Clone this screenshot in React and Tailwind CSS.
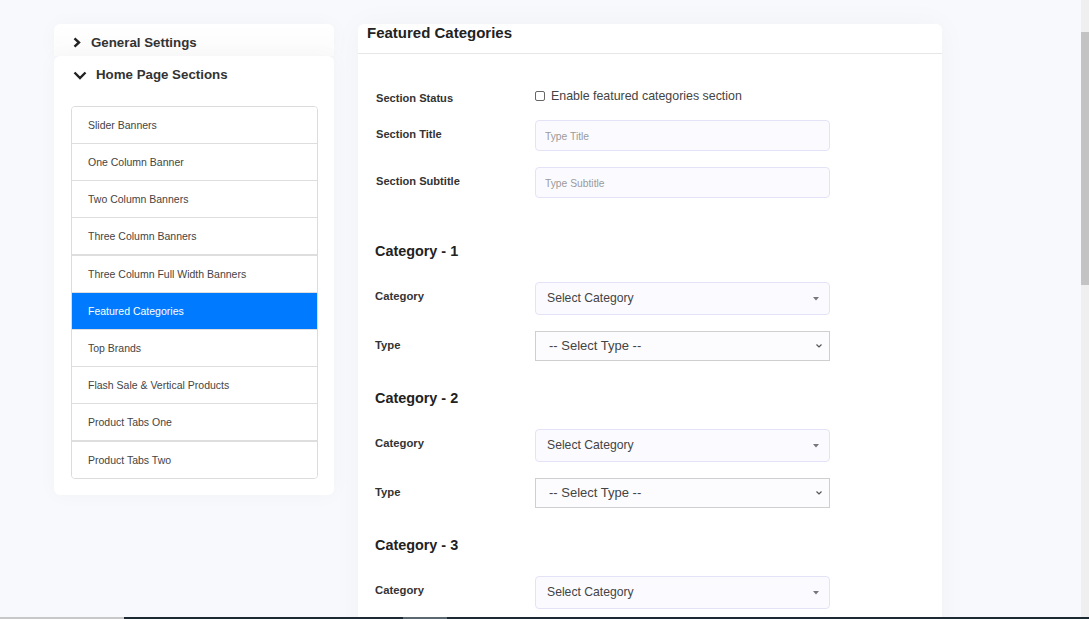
import React from "react";

const font = { fontFamily: '"Liberation Sans", Arial, sans-serif' };

const items = [
  "Slider Banners",
  "One Column Banner",
  "Two Column Banners",
  "Three Column Banners",
  "Three Column Full Width Banners",
  "Featured Categories",
  "Top Brands",
  "Flash Sale & Vertical Products",
  "Product Tabs One",
  "Product Tabs Two",
];

function SelectCategory() {
  return (
    <div className="w-[295px] h-[33px] rounded-[4px] border border-[#e3e3f7] bg-[#fbfbff] flex items-center justify-between pl-[11px] pr-[10px]">
      <span className="text-[12.2px] text-[#444]">Select Category</span>
      <svg width="6" height="4" viewBox="0 0 6 4"><path d="M0 0 L6 0 L3 3.5 Z" fill="#777" /></svg>
    </div>
  );
}

function SelectType() {
  return (
    <div className="w-[295px] h-[30px] border border-[#cfcfcf] bg-[#fcfcff] flex items-center justify-between pl-[13px] pr-[6px]">
      <span className="text-[13px] text-[#444]">-- Select Type --</span>
      <svg width="8" height="6" viewBox="0 0 8 6"><path d="M1.5 1.5 L4 4 L6.5 1.5" fill="none" stroke="#555" strokeWidth="1.2" /></svg>
    </div>
  );
}

function CategoryBlock({ n, first }) {
  return (
    <div className={first ? "mt-[45px]" : "mt-[29px]"}>
      <div className="h-[18px] flex items-center text-[14.4px] font-bold text-[#222] -ml-[1px]">Category - {n}</div>
      <div className="mt-[21px] flex items-center">
        <div className="w-[159px] text-[11.3px] font-bold text-[#333] -mt-[4px] -ml-[1px] mr-[1px]">Category</div>
        <SelectCategory />
      </div>
      <div className="mt-[16px] flex items-center">
        <div className="w-[159px] text-[11.3px] font-bold text-[#333] -mt-[1px] -ml-[1px] mr-[1px]">Type</div>
        <SelectType />
      </div>
    </div>
  );
}

export default function App() {
  return (
    <div style={font} className="relative w-full h-[619px] overflow-hidden bg-[#f8f9fd]">
      <div className="flex items-start pl-[54px] pt-[24px] gap-[24px]">
        {/* Left column */}
        <div className="w-[280px] flex flex-col">
          <div className="h-[32px] rounded-t-[6px] bg-gradient-to-b from-white to-[#fbfbfc] flex items-center pl-[19px] pt-[5px] shadow-[0_0_20px_rgba(0,0,0,0.03)]">
            <svg width="8" height="11" viewBox="0 0 8 11" className="mt-[-1px]">
              <path d="M1.5 1.3 L6 5.5 L1.5 9.7" fill="none" stroke="#222" strokeWidth="2.4" strokeLinejoin="miter" />
            </svg>
            <span className="ml-[10px] text-[13.3px] font-bold text-[#333]">General Settings</span>
          </div>
          <div className="rounded-[6px] bg-white pt-[9px] pb-[16px] pl-[17px] pr-[16px] shadow-[0_0_20px_rgba(0,0,0,0.03)]">
            <div className="h-[20px] flex items-center pl-[2px]">
              <svg width="14" height="9" viewBox="0 0 14 9">
                <path d="M1.5 1.5 L7 7 L12.5 1.5" fill="none" stroke="#222" strokeWidth="2.4" />
              </svg>
              <span className="ml-[9px] text-[13.3px] font-bold text-[#333]">Home Page Sections</span>
            </div>
            <div className="mt-[21px] rounded-[4px] border border-[#dcdcdc] overflow-hidden">
              {items.map((t, i) => {
                const active = t === "Featured Categories";
                const thickTop = i === 4 || i === 9;
                return (
                  <div
                    key={t}
                    className={
                      "flex items-center pl-[16px] pt-[2px] text-[10.5px] " +
                      (i > 0 ? (thickTop ? "border-t-2 border-[#dedede] h-[38px] " : "border-t border-[#dedede] h-[37px] ") : "h-[36px] ") +
                      (active ? "bg-[#007bff] text-white border-[#007bff]" : "bg-white text-[#444]")
                    }
                  >
                    {t}
                  </div>
                );
              })}
            </div>
          </div>
        </div>

        {/* Right card */}
        <div className="w-[584px] h-[700px] bg-white rounded-t-[6px] shadow-[0_0_30px_rgba(0,0,0,0.035)]">
          <div className="h-[30px] border-b border-[#e6e6e6] pl-[9px] flex items-start">
            <span className="text-[15px] font-bold text-[#222] leading-[18px]">Featured Categories</span>
          </div>
          <div className="pl-[18px] pt-[33px]">
            <div className="flex items-center h-[18px]">
              <div className="w-[159px] text-[11.1px] font-bold text-[#333] mt-[4px]">Section Status</div>
              <div className="flex items-center">
                <div className="w-[10px] h-[10px] border border-[#666] rounded-[2px] bg-white" />
                <span className="ml-[6px] text-[12.4px] text-[#444]">Enable featured categories section</span>
              </div>
            </div>
            <div className="mt-[15px] flex items-center">
              <div className="w-[159px] text-[11.1px] font-bold text-[#333] -mt-[3px]">Section Title</div>
              <input
                placeholder="Type Title"
                className="w-[295px] h-[31px] rounded-[4px] border border-[#e3e3f7] bg-[#fbfbff] pl-[9px] pt-[2px] text-[10.3px] outline-none placeholder:text-[#9a9a9a]"
              />
            </div>
            <div className="mt-[16px] flex items-center">
              <div className="w-[159px] text-[11.1px] font-bold text-[#333] -mt-[3px]">Section Subtitle</div>
              <input
                placeholder="Type Subtitle"
                className="w-[295px] h-[31px] rounded-[4px] border border-[#e3e3f7] bg-[#fbfbff] pl-[9px] pt-[2px] text-[10.3px] outline-none placeholder:text-[#9a9a9a]"
              />
            </div>
            <CategoryBlock n={1} first />
            <CategoryBlock n={2} />
            <CategoryBlock n={3} />
          </div>
        </div>
      </div>

      {/* Scrollbar overlay */}
      <div className="absolute top-0 right-0 w-[8px] h-[619px] bg-[#efefef]">
        <div className="absolute top-[32px] left-0 w-[8px] h-[253px] bg-[#c3c3c3]" />
      </div>
      {/* Bottom taskbar peek */}
      <div className="absolute bottom-0 left-0 w-full h-[2px] flex">
        <div className="w-[124px] bg-[#c8c8c8]" />
        <div className="w-[279px] bg-[#1d2a33]" />
        <div className="w-[44px] bg-[#5b6870]" />
        <div className="flex-1 bg-[#1d2a33]" />
      </div>
    </div>
  );
}
